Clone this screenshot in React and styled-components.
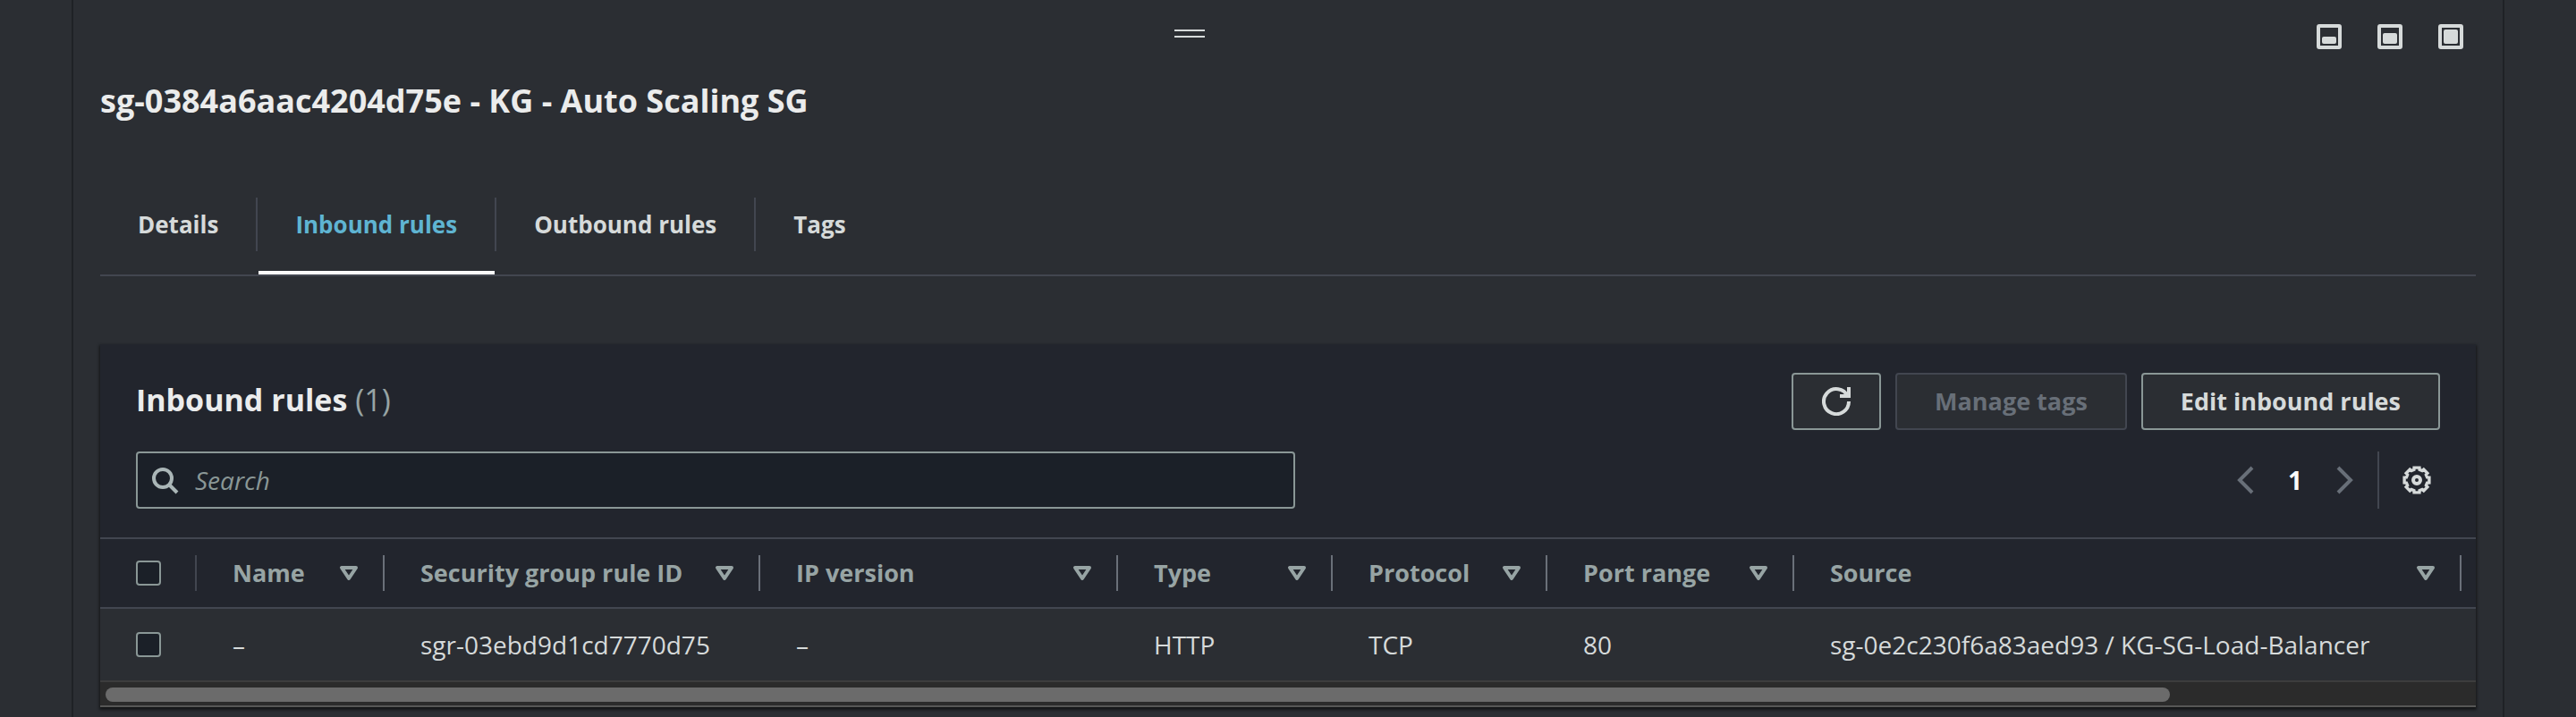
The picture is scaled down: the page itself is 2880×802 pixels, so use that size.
import React from "react";
import styled, { createGlobalStyle, ThemeProvider } from "styled-components";

const theme = {
  panel: "#2b2e33",
  surface: "#22252d",
  field: "#1b2028",
  edge: "#1f2226",
  divider: "#424650",
  dividerStrong: "#6a7079",
  outline: "#8a9796",
  heading: "#ebecec",
  text: "#d6dada",
  muted: "#97a4a4",
  disabled: "#686f78",
  accent: "#5fb4d2",
};

const GlobalStyle = createGlobalStyle`
  *, *::before, *::after { box-sizing: border-box; }
  body {
    margin: 0;
    background: ${theme.panel};
    color: ${theme.text};
    font-family: "Open Sans", "Noto Sans", sans-serif;
    font-size: 28px;
    line-height: 40px;
  }
  button {
    margin: 0;
    padding: 0;
    border: 0;
    background: none;
    color: inherit;
    font: inherit;
    cursor: pointer;
  }
`;

const Panel = styled.section`
  min-height: 100vh;
  margin: 0 80px;
  padding: 27px 30px 11px;
  border: solid ${({ theme }) => theme.edge};
  border-width: 0 2px;
`;

const PanelBar = styled.div`
  display: flex;
  align-items: flex-start;
  gap: 42px;
  height: 28px;
  padding-right: 14px;
`;

const GripArea = styled.div`
  flex: 1;
  display: flex;
  justify-content: center;
  padding-top: 6px;
`;

const Grip = styled.button`
  width: 34px;
  height: 9px;
  border: solid ${({ theme }) => theme.text};
  border-width: 2px 0;
  cursor: row-resize;
`;

const PanelSizes = styled.div`
  display: flex;
  gap: 40px;
`;

const SizeButton = styled.button`
  display: flex;
  align-items: flex-end;
  width: 28px;
  height: 28px;
  padding: 2px;
  border: 4px solid ${({ theme }) => theme.text};
  border-radius: 3px;

  &::after {
    content: "";
    flex: 1;
    height: ${({ $fill }) => $fill}px;
    border-radius: 2px;
    background: ${({ theme }) => theme.text};
  }
`;

const PanelTitle = styled.h1`
  margin: 34px 0 84px;
  color: ${({ theme }) => theme.heading};
  font-size: 36px;
  font-weight: 700;
  line-height: 48px;
`;

const Tabs = styled.div`
  display: flex;
  margin-bottom: 76px;
  border-bottom: 2px solid ${({ theme }) => theme.divider};
`;

const Tab = styled.button`
  display: flex;
  flex-direction: column;
  gap: 22px;
  color: ${({ theme, $active }) => ($active ? theme.accent : theme.text)};
  font-size: 26px;
  font-weight: 700;

  &::after {
    content: "";
    align-self: stretch;
    height: 4px;
    margin: 0 2px 0 1px;
    background: ${({ $active }) => ($active ? "#fafafa" : "transparent")};
  }
`;

const TabLabel = styled.span`
  padding: 0 42px;
  border-right: 2px solid ${({ theme }) => theme.divider};
  line-height: 60px;

  ${Tab}:last-child & {
    border-color: transparent;
  }
`;

const Card = styled.section`
  background: ${({ theme }) => theme.surface};
  box-shadow: 0 2px 3px 1px rgba(0, 0, 0, 0.55);
`;

const CardHeader = styled.header`
  display: grid;
  gap: 24px;
  padding: 32px 40px;
`;

const HeaderRow = styled.div`
  display: flex;
  align-items: center;
  justify-content: space-between;
`;

const CardTitle = styled.h2`
  margin: 0;
  padding-bottom: 4px;
  color: ${({ theme }) => theme.heading};
  font-size: 34px;
  font-weight: 700;
  line-height: 48px;
`;

const Count = styled.span`
  color: ${({ theme }) => theme.muted};
  font-weight: 400;
`;

const Actions = styled.div`
  display: flex;
  gap: 16px;
`;

const ActionButton = styled.button`
  display: flex;
  align-items: center;
  justify-content: center;
  height: 64px;
  padding: 0 ${({ $icon }) => ($icon ? 32 : 42)}px;
  border: 2px solid ${({ theme }) => theme.outline};
  border-radius: 4px;
  background: ${({ theme }) => theme.panel};
  color: ${({ theme }) => theme.text};
  font-size: 27px;
  font-weight: 700;

  &:disabled {
    border-color: ${({ theme }) => theme.divider};
    color: ${({ theme }) => theme.disabled};
    cursor: default;
  }
`;

const SearchBox = styled.label`
  display: flex;
  align-items: center;
  gap: 18px;
  width: 50.3%;
  height: 64px;
  padding: 0 14px;
  border: 2px solid ${({ theme }) => theme.outline};
  border-radius: 4px;
  background: ${({ theme }) => theme.field};
  color: #aab6b7;
`;

const SearchInput = styled.input`
  flex: 1;
  min-width: 0;
  padding: 0;
  border: 0;
  outline: 0;
  background: none;
  color: ${({ theme }) => theme.text};
  font: inherit;

  &::placeholder {
    color: ${({ theme }) => theme.outline};
    font-style: italic;
    opacity: 1;
  }
`;

const Preferences = styled.div`
  display: flex;
  align-items: center;
  height: 64px;
  padding-right: 10px;
`;

const Pagination = styled.nav`
  display: flex;
  align-items: center;
  align-self: stretch;
  margin-right: 26px;
  padding-right: 20px;
  border-right: 2px solid ${({ theme }) => theme.divider};
`;

const IconButton = styled.button`
  display: flex;

  &:disabled {
    color: ${({ theme }) => theme.disabled};
    cursor: default;
  }
`;

const PageButton = styled.button`
  width: 80px;
  color: #fafafa;
  font-weight: 700;
`;

const Table = styled.table`
  width: 100%;
  border-top: 2px solid ${({ theme }) => theme.divider};
  border-spacing: 0;
  table-layout: fixed;
  text-align: left;
`;

const Column = styled.col`
  width: ${({ $width }) => ($width ? `${$width}px` : "auto")};
`;

const HeadCell = styled.th`
  height: 78px;
  padding: 0;
  border-bottom: 2px solid ${({ theme }) => theme.divider};
  color: ${({ theme }) => theme.muted};
`;

const HeadContent = styled.div`
  display: flex;
  align-items: center;
  height: 40px;
  padding-left: 40px;
  border-right: 2px solid
    ${({ theme, $soft }) => ($soft ? theme.divider : theme.dividerStrong)};
`;

const SortButton = styled.button`
  flex: 1;
  display: flex;
  align-items: center;
  justify-content: space-between;
  padding-right: 22px;
  font-size: 27px;
  font-weight: 700;
  text-align: left;
  white-space: nowrap;
`;

const Cell = styled.td`
  height: 80px;
  padding: 0 0 0 40px;
  background: ${({ theme }) => theme.panel};
  white-space: nowrap;
`;

const Checkbox = styled.input.attrs({ type: "checkbox" })`
  appearance: none;
  display: block;
  width: 28px;
  height: 28px;
  margin: 0;
  border: 2px solid ${({ theme }) => theme.outline};
  border-radius: 4px;
  background: ${({ theme }) => theme.field};
`;

const ScrollTrack = styled.div`
  height: 30px;
  padding: 6px;
  border: solid #3d3d3d;
  border-width: 2px 0;
  border-bottom-color: #565656;
  background: #2b2b2b;
`;

const ScrollThumb = styled.div`
  width: 87.3%;
  height: 16px;
  border-radius: 8px;
  background: #6b6b6b;
`;

const Svg = styled.svg.attrs({ viewBox: "0 0 16 16", "aria-hidden": true })`
  flex: none;
  width: 32px;
  height: 32px;
  fill: none;
  stroke: currentColor;
  stroke-width: 2;
`;

const SortSvg = styled(Svg)`
  stroke-linejoin: round;
`;

const gearOutline = Array.from({ length: 8 }, (_, i) =>
  [
    [-12, 7.1],
    [12, 7.1],
    [15, 6],
    [30, 6],
  ].map(([offset, radius]) => {
    const angle = ((i * 45 + offset - 90) * Math.PI) / 180;
    return `${(8 + radius * Math.cos(angle)).toFixed(2)},${(8 + radius * Math.sin(angle)).toFixed(2)}`;
  })
)
  .flat()
  .join(" ");

const RefreshIcon = () => (
  <Svg>
    <path d="M10 5h5V0" />
    <path d="M15 8a7 7 0 1 1-.7-3" />
  </Svg>
);

const SearchIcon = () => (
  <Svg>
    <circle cx="7" cy="7" r="5" />
    <path d="m15 15-4.500-4.500" />
  </Svg>
);

const ChevronIcon = ({ next }) => (
  <Svg>
    <path d={next ? "m4 1 7 7-7 7" : "M12 1 5 8l7 7"} />
  </Svg>
);

const GearOutline = styled.polygon`
  stroke-width: 1.7;
`;

const GearIcon = () => (
  <Svg>
    <GearOutline points={gearOutline} />
    <circle cx="8" cy="8" r="2" />
  </Svg>
);

const SortIcon = () => (
  <SortSvg>
    <path d="M4 5h8l-4 6z" />
  </SortSvg>
);

const tabs = ["Details", "Inbound rules", "Outbound rules", "Tags"];

const columns = [
  { key: "name", label: "Name", width: 210 },
  { key: "id", label: "Security group rule ID", width: 420 },
  { key: "ip", label: "IP version", width: 400 },
  { key: "type", label: "Type", width: 240 },
  { key: "protocol", label: "Protocol", width: 240 },
  { key: "port", label: "Port range", width: 276 },
  { key: "source", label: "Source" },
];

const rules = [
  {
    name: "–",
    id: "sgr-03ebd9d1cd7770d75",
    ip: "–",
    type: "HTTP",
    protocol: "TCP",
    port: "80",
    source: "sg-0e2c230f6a83aed93 / KG-SG-Load-Balancer",
  },
];

export default function App() {
  return (
    <ThemeProvider theme={theme}>
      <GlobalStyle />
      <Panel>
        <PanelBar>
          <GripArea>
            <Grip aria-label="Resize panel" />
          </GripArea>
          <PanelSizes>
            <SizeButton $fill={8} aria-label="Small panel" />
            <SizeButton $fill={12} aria-label="Medium panel" />
            <SizeButton $fill={16} aria-label="Full panel" />
          </PanelSizes>
        </PanelBar>

        <PanelTitle>sg-0384a6aac4204d75e - KG - Auto Scaling SG</PanelTitle>

        <Tabs role="tablist">
          {tabs.map((tab) => (
            <Tab
              key={tab}
              role="tab"
              aria-selected={tab === "Inbound rules"}
              $active={tab === "Inbound rules"}
            >
              <TabLabel>{tab}</TabLabel>
            </Tab>
          ))}
        </Tabs>

        <Card>
          <CardHeader>
            <HeaderRow>
              <CardTitle>
                Inbound rules <Count>({rules.length})</Count>
              </CardTitle>
              <Actions>
                <ActionButton $icon aria-label="Refresh">
                  <RefreshIcon />
                </ActionButton>
                <ActionButton disabled>Manage tags</ActionButton>
                <ActionButton>Edit inbound rules</ActionButton>
              </Actions>
            </HeaderRow>
            <HeaderRow>
              <SearchBox>
                <SearchIcon />
                <SearchInput placeholder="Search" aria-label="Search" />
              </SearchBox>
              <Preferences>
                <Pagination aria-label="Pages">
                  <IconButton disabled aria-label="Previous page">
                    <ChevronIcon />
                  </IconButton>
                  <PageButton aria-current="page">1</PageButton>
                  <IconButton disabled aria-label="Next page">
                    <ChevronIcon next />
                  </IconButton>
                </Pagination>
                <IconButton aria-label="Preferences">
                  <GearIcon />
                </IconButton>
              </Preferences>
            </HeaderRow>
          </CardHeader>

          <Table>
            <colgroup>
              <Column $width={108} />
              {columns.map((column) => (
                <Column key={column.key} $width={column.width} />
              ))}
              <Column $width={16} />
            </colgroup>
            <thead>
              <tr>
                <HeadCell>
                  <HeadContent $soft>
                    <Checkbox aria-label="Select all rules" />
                  </HeadContent>
                </HeadCell>
                {columns.map((column) => (
                  <HeadCell key={column.key} scope="col">
                    <HeadContent>
                      <SortButton>
                        {column.label}
                        <SortIcon />
                      </SortButton>
                    </HeadContent>
                  </HeadCell>
                ))}
                <HeadCell />
              </tr>
            </thead>
            <tbody>
              {rules.map((rule) => (
                <tr key={rule.id}>
                  <Cell>
                    <Checkbox aria-label={`Select ${rule.id}`} />
                  </Cell>
                  {columns.map((column) => (
                    <Cell key={column.key}>{rule[column.key]}</Cell>
                  ))}
                  <Cell />
                </tr>
              ))}
            </tbody>
          </Table>
          <ScrollTrack>
            <ScrollThumb />
          </ScrollTrack>
        </Card>
      </Panel>
    </ThemeProvider>
  );
}
